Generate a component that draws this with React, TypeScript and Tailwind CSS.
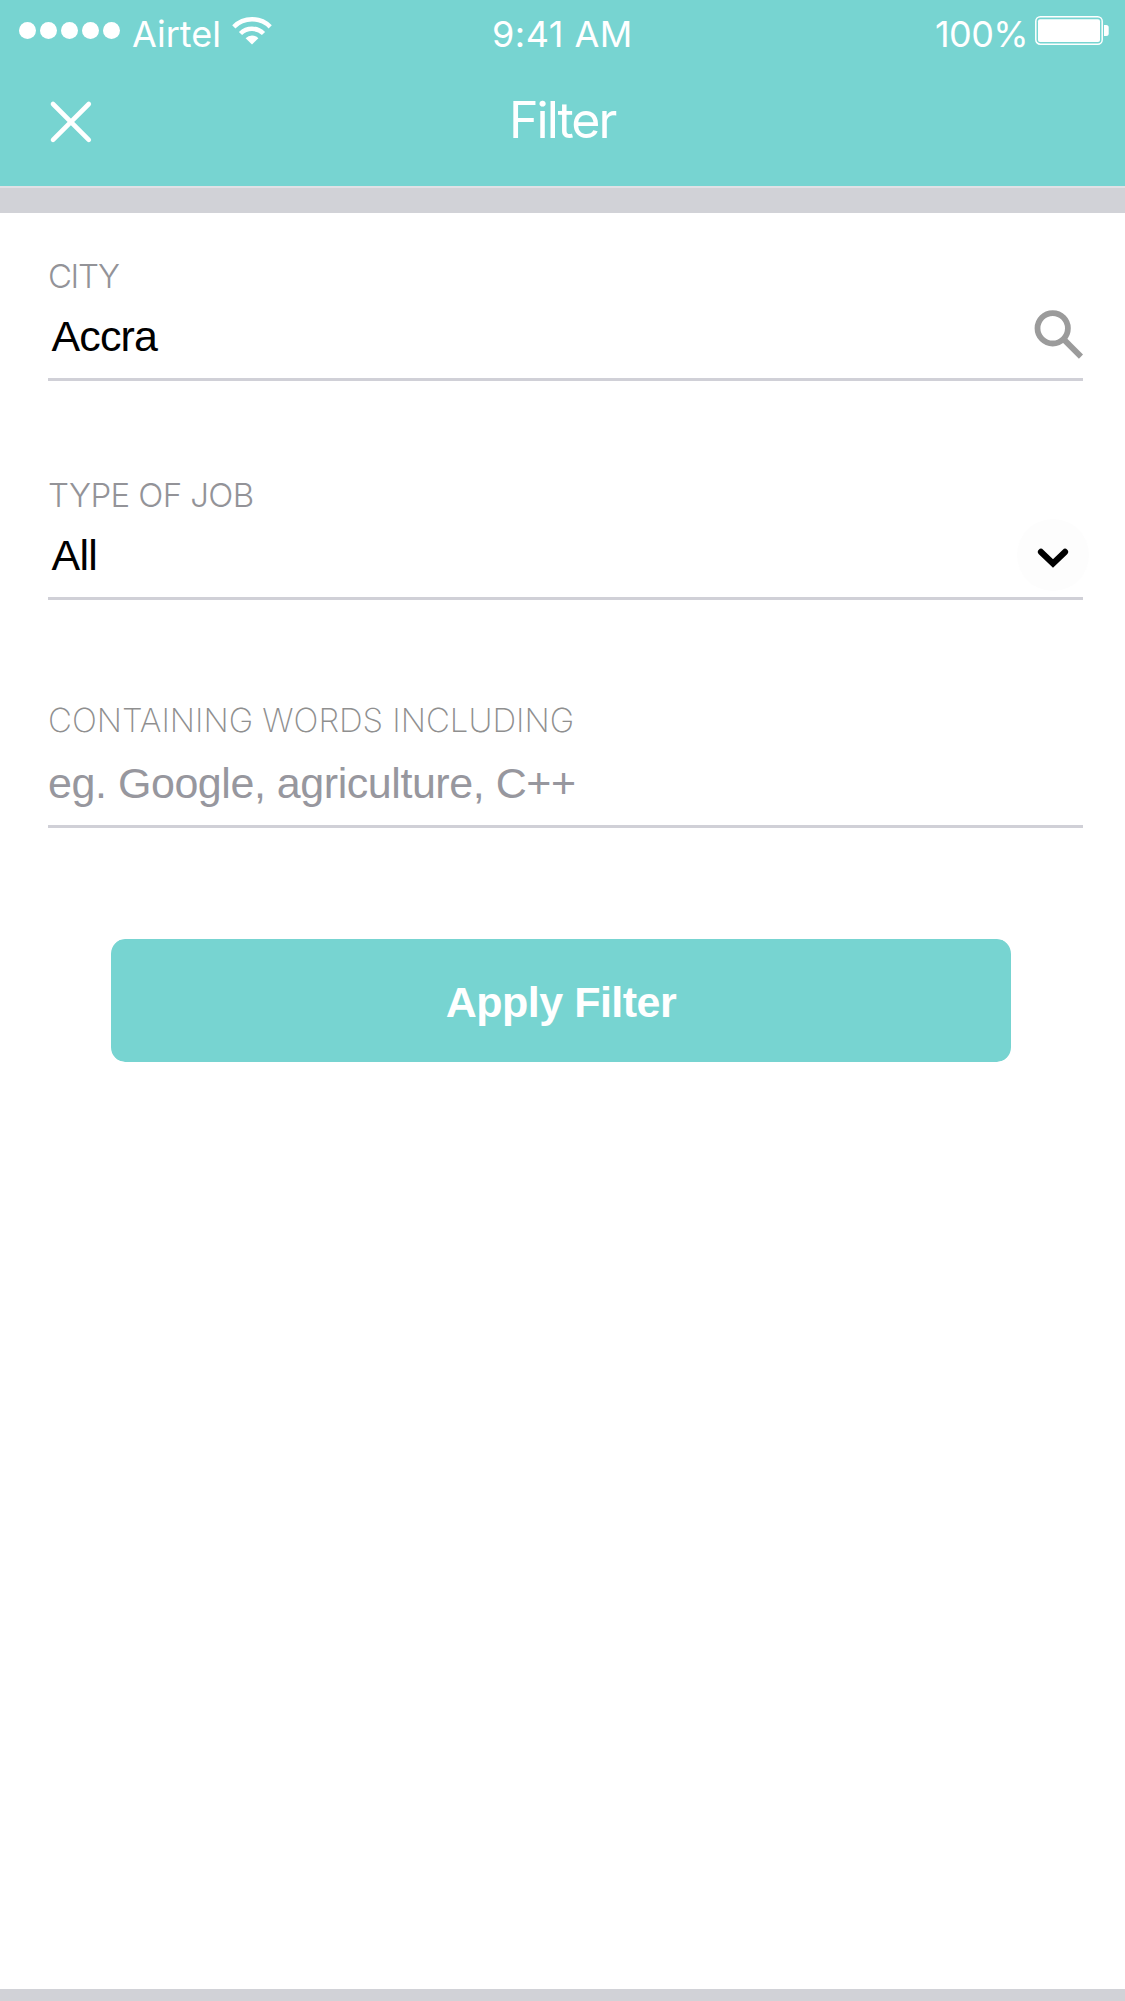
import React from "react";

function StatusBar() {
  return (
    <div className="flex h-[58px] shrink-0 items-start pt-[10px] text-[36px] font-[390] leading-[48px] text-white">
      <div className="flex w-[492px] items-start pl-[19px]">
        <div className="mt-[12px] flex gap-[4px]">
          {[0, 1, 2, 3, 4].map((i) => (
            <span key={i} className="size-[17px] rounded-full bg-white" />
          ))}
        </div>
        <span className="ml-[12px] tracking-[0px]">Airtel</span>
        <svg className="mt-[5px] ml-auto mr-[219px] shrink-0" width="42" height="32" viewBox="0 0 42 32" fill="none">
          <path d="M2.8 11.8a25.8 25.8 0 0 1 36.4 0M9.5 18.5a16.3 16.3 0 0 1 23 0" stroke="#fff" strokeWidth="4.5" />
          <path d="M21 29.6l-6.4-6.4a9.2 9.2 0 0 1 12.8 0z" fill="#fff" />
        </svg>
      </div>
      <span className="w-[443px] tracking-[0.5px]">9:41 AM</span>
      <span className="w-[100px] tracking-[-0.6px]">100%</span>
      <svg className="mt-[5px] shrink-0" width="75" height="31" viewBox="0 0 75 31" fill="none">
        <rect x="0.8" y="1.8" width="66.4" height="27.4" rx="4.5" stroke="#fff" strokeWidth="1.5" />
        <rect x="3" y="4.2" width="62" height="22.8" rx="2" fill="#fff" />
        <path d="M69 10h2.2q2.5 0 2.5 2.5v6q0 2.5-2.5 2.5H69z" fill="#fff" />
      </svg>
    </div>
  );
}

function TitleBar() {
  return (
    <div className="flex h-[128px] shrink-0 items-start pl-[49px] text-white">
      <button aria-label="Close" className="mt-[42px]">
        <svg width="44" height="44" viewBox="0 0 44 44" fill="none">
          <path d="M4 4l35.8 35.8M39.8 4L4 39.8" stroke="#fff" strokeWidth="4.6" strokeLinecap="round" />
        </svg>
      </button>
      <h1 className="ml-[416px] mt-[32px] text-[50px] font-normal leading-[60px] tracking-[-2px]">Filter</h1>
    </div>
  );
}

export default function App() {
  return (
    <div className="flex h-[2001px] w-[1125px] flex-col overflow-hidden bg-white font-['Inter',sans-serif]">
      <header className="flex h-[188px] shrink-0 flex-col border-b-2 border-[#e0e1e5] bg-[#77d4d1]">
        <StatusBar />
        <TitleBar />
      </header>
      <div className="h-[25px] shrink-0 bg-[#d1d2d7]" />

      <main className="flex flex-1 flex-col pt-[43px]">
        <section className="ml-[48px] flex h-[125px] w-[1035px] shrink-0 border-b-3 border-[#d0d0d7]">
          <div className="flex-1">
            <div className="text-[33px] font-[260] leading-[40px] tracking-[-1.4px] text-[#939398]">CITY</div>
            <div className="mt-[15px] pl-[3.5px] font-['Liberation_Sans',sans-serif] text-[43px] leading-[50px] tracking-[-0.9px] text-black">
              Accra
            </div>
          </div>
          <svg className="mt-[52px] shrink-0" width="51" height="51" viewBox="0 0 51 51" fill="none" stroke="#9b9b9b" strokeWidth="5.8">
            <circle cx="20.7" cy="20.3" r="15.2" />
            <path d="M31.5 31.1L49 48.6" />
          </svg>
        </section>

        <section className="ml-[48px] mt-[94px] flex h-[125px] w-[1035px] shrink-0 border-b-3 border-[#d0d0d7]">
          <div className="flex-1">
            <div className="text-[33px] font-[260] leading-[40px] tracking-[-0.6px] text-[#939398]">TYPE OF JOB</div>
            <div className="mt-[15px] pl-[3.5px] font-['Liberation_Sans',sans-serif] text-[43px] leading-[50px] tracking-[-0.8px] text-black">
              All
            </div>
          </div>
          <button aria-label="Choose job type" className="-mr-[6px] mt-[44px] flex size-[72px] shrink-0 items-center justify-center rounded-full bg-[#fdfdfd]">
            <svg width="36" height="28" viewBox="0 0 36 28" fill="none">
              <path d="M6 10.9l12 11.6 12-11.6" stroke="#000" strokeWidth="6.2" strokeLinecap="round" />
            </svg>
          </button>
        </section>

        <section className="ml-[48px] mt-[100px] h-[128px] w-[1035px] shrink-0 border-b-3 border-[#d0d0d7]">
          <div className="text-[33px] font-[220] leading-[40px] tracking-[-0.03px] text-[#8f8f8f]">CONTAINING WORDS INCLUDING</div>
          <div className="mt-[18px] font-['Liberation_Sans',sans-serif] text-[43px] leading-[50px] tracking-[-0.45px] text-[#97979e]">
            eg. Google, agriculture, C++
          </div>
        </section>

        <button className="ml-[110px] mt-[111px] flex h-[123px] w-[902px] shrink-0 items-center justify-center border-x border-transparent bg-clip-padding rounded-[15px] bg-[#77d4d1] pt-[3px] font-['Liberation_Sans',sans-serif] text-[43px] font-bold leading-[50px] tracking-[-0.5px] text-white">
          Apply Filter
        </button>
      </main>
      <footer className="h-[12px] shrink-0 bg-[#d1d2d7]" />
    </div>
  );
}
